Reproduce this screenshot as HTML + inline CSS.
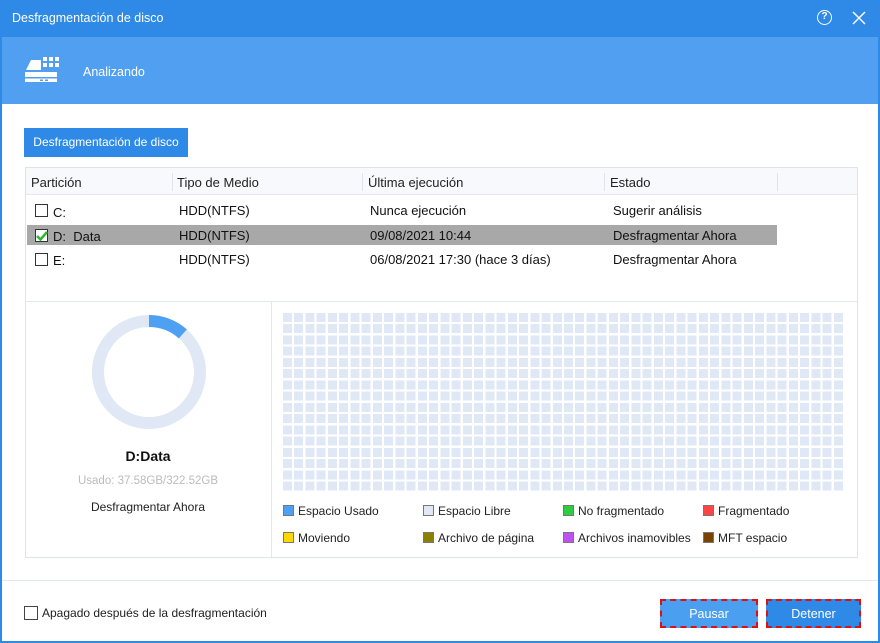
<!DOCTYPE html>
<html><head><meta charset="utf-8"><style>
*{margin:0;padding:0;box-sizing:border-box}
body{width:880px;height:643px;overflow:hidden;font-family:"Liberation Sans","DejaVu Sans",sans-serif;background:#fff;position:relative;font-size:12px;color:#222}
.a{position:absolute}
.win{left:0;top:0;width:880px;height:643px;border:2px solid #2e8ae6;border-top:none}
.title{left:0;top:0;width:880px;height:37px;background:#2e8ae6;color:#fff;font-size:12.5px;padding:11px 0 0 12px}
.hdr{left:0;top:37px;width:880px;height:67px;background:#509ff0}
.tab{left:24px;top:128px;width:164px;height:29px;background:#2e8ae6;color:#fff;font-size:12px;line-height:29px;text-align:center}
.box{left:25px;top:167px;width:833px;height:391px;border:1px solid #dfe3ea}
.th{font-size:13px;color:#222}
.td{font-size:13px;color:#111}
.cb{width:13px;height:13px;border:1px solid #333;background:#fff}
.grid{left:283px;top:313px;width:562px;height:180px;background:repeating-linear-gradient(90deg,transparent 0 9px,#fff 9px 11.24px),repeating-linear-gradient(180deg,transparent 0 9px,#fff 9px 11.24px),#dfe8f4}
.lg{font-size:12px;color:#222}
.sw{width:11px;height:11px;border:1px solid #777}
.btn{height:29px;color:#fff;font-size:12.5px;text-align:center;line-height:27px;border:2px dashed #e01010}
</style></head><body>
<div class="a title">Desfragmentación de disco</div>
<div class="a" style="left:817px;top:10px;width:15px;height:15px;border:1.5px solid #fff;border-radius:50%;color:#fff;font-size:10px;text-align:center;line-height:12px;font-weight:bold">?</div>
<svg class="a" style="left:852px;top:11px" width="14" height="14"><path d="M1 1L13 13M13 1L1 13" stroke="#fff" stroke-width="1.5"/></svg>
<div class="a hdr"></div>
<svg class="a" style="left:24px;top:55px" width="38" height="30">
<path d="M2 15L7 5H17V15Z M1 17H33V22H1Z M1 23.5H33V27H1Z" fill="#fff"/>
<rect x="16" y="24.5" width="3" height="1.5" fill="#509ff0"/><rect x="21" y="24.5" width="3" height="1.5" fill="#509ff0"/>
<g fill="#fff"><rect x="19" y="2" width="4" height="4"/><rect x="25" y="2" width="4" height="4"/><rect x="31" y="2" width="4" height="4"/><rect x="19" y="8" width="4" height="4"/><rect x="25" y="8" width="4" height="4"/><rect x="31" y="8" width="4" height="4"/></g>
</svg>
<div class="a" style="left:83px;top:65px;color:#fff;font-size:12.5px">Analizando</div>
<div class="a tab">Desfragmentación de disco</div>
<div class="a box"></div>
<div class="a" style="left:26px;top:168px;width:831px;height:27px;background:#f7f9fc;border-bottom:1px solid #e3e7ee"></div>
<div class="a" style="left:172px;top:173px;width:1px;height:18px;background:#e0e4ea"></div>
<div class="a" style="left:362px;top:173px;width:1px;height:18px;background:#e0e4ea"></div>
<div class="a" style="left:604px;top:173px;width:1px;height:18px;background:#e0e4ea"></div>
<div class="a" style="left:777px;top:173px;width:1px;height:18px;background:#e0e4ea"></div>
<div class="a th" style="left:31px;top:175px">Partición</div>
<div class="a th" style="left:177px;top:175px">Tipo de Medio</div>
<div class="a th" style="left:368px;top:175px">Última ejecución</div>
<div class="a th" style="left:610px;top:175px">Estado</div>
<div class="a" style="left:27px;top:225px;width:750px;height:20px;background:#a8a8a8"></div>
<div class="a cb" style="left:35px;top:204px"></div>
<div class="a cb" style="left:35px;top:229px"></div>
<svg class="a" style="left:36px;top:230px" width="12" height="12"><path d="M1 6L4.5 9.5L11 2" stroke="#2fb52f" stroke-width="2.5" fill="none"/></svg>
<div class="a cb" style="left:35px;top:253px"></div>
<div class="a td" style="left:53px;top:205px">C:</div>
<div class="a td" style="left:53px;top:229px">D:&nbsp; Data</div>
<div class="a td" style="left:53px;top:253px">E:</div>
<div class="a td" style="left:179px;top:203px">HDD(NTFS)</div>
<div class="a td" style="left:179px;top:228px">HDD(NTFS)</div>
<div class="a td" style="left:179px;top:252px">HDD(NTFS)</div>
<div class="a td" style="left:370px;top:203px">Nunca ejecución</div>
<div class="a td" style="left:370px;top:228px">09/08/2021 10:44</div>
<div class="a td" style="left:370px;top:252px">06/08/2021 17:30 (hace 3 días)</div>
<div class="a td" style="left:613px;top:203px">Sugerir análisis</div>
<div class="a td" style="left:613px;top:228px">Desfragmentar Ahora</div>
<div class="a td" style="left:613px;top:252px">Desfragmentar Ahora</div>
<div class="a" style="left:26px;top:301px;width:831px;height:1px;background:#e3e7ee"></div>
<div class="a" style="left:271px;top:302px;width:1px;height:255px;background:#e3e7ee"></div>
<svg class="a" style="left:90px;top:313px" width="120" height="120">
<circle cx="59" cy="59" r="51" fill="none" stroke="#dfe8f4" stroke-width="12"/>
<circle cx="59" cy="59" r="51" fill="none" stroke="#4ea1f2" stroke-width="12" stroke-dasharray="37 400" transform="rotate(-90 59 59)"/>
</svg>
<div class="a" style="left:25px;top:448px;width:246px;text-align:center;font-weight:bold;font-size:14px;color:#111">D:Data</div>
<div class="a" style="left:25px;top:475px;width:246px;text-align:center;font-size:11.5px;color:#bbb">Usado: 37.58GB/322.52GB</div>
<div class="a" style="left:25px;top:500px;width:246px;text-align:center;font-size:12px;color:#222">Desfragmentar Ahora</div>
<div class="a grid"></div>
<div class="a sw" style="left:283px;top:505px;background:#4ea1f2"></div><div class="a lg" style="left:298px;top:504px">Espacio Usado</div>
<div class="a sw" style="left:423px;top:505px;background:#dfe8f4"></div><div class="a lg" style="left:438px;top:504px">Espacio Libre</div>
<div class="a sw" style="left:563px;top:505px;background:#2ecc40"></div><div class="a lg" style="left:578px;top:504px">No fragmentado</div>
<div class="a sw" style="left:703px;top:505px;background:#f44"></div><div class="a lg" style="left:718px;top:504px">Fragmentado</div>
<div class="a sw" style="left:283px;top:532px;background:#ffd700"></div><div class="a lg" style="left:298px;top:531px">Moviendo</div>
<div class="a sw" style="left:423px;top:532px;background:#8b8000"></div><div class="a lg" style="left:438px;top:531px">Archivo de página</div>
<div class="a sw" style="left:563px;top:532px;background:#c050f0"></div><div class="a lg" style="left:578px;top:531px">Archivos inamovibles</div>
<div class="a sw" style="left:703px;top:532px;background:#7a4200"></div><div class="a lg" style="left:718px;top:531px">MFT espacio</div>
<div class="a" style="left:2px;top:580px;width:876px;height:1px;background:#e3e7ee"></div>
<div class="a" style="left:24px;top:606px;width:14px;height:14px;border:1px solid #444;background:#fff"></div>
<div class="a" style="left:42px;top:606px;font-size:12px;color:#222">Apagado después de la desfragmentación</div>
<div class="a btn" style="left:660px;top:599px;width:98px;background:#4a9ff0">Pausar</div>
<div class="a btn" style="left:766px;top:599px;width:95px;background:#2e8ae6">Detener</div>
<div class="a win"></div>
</body></html>
